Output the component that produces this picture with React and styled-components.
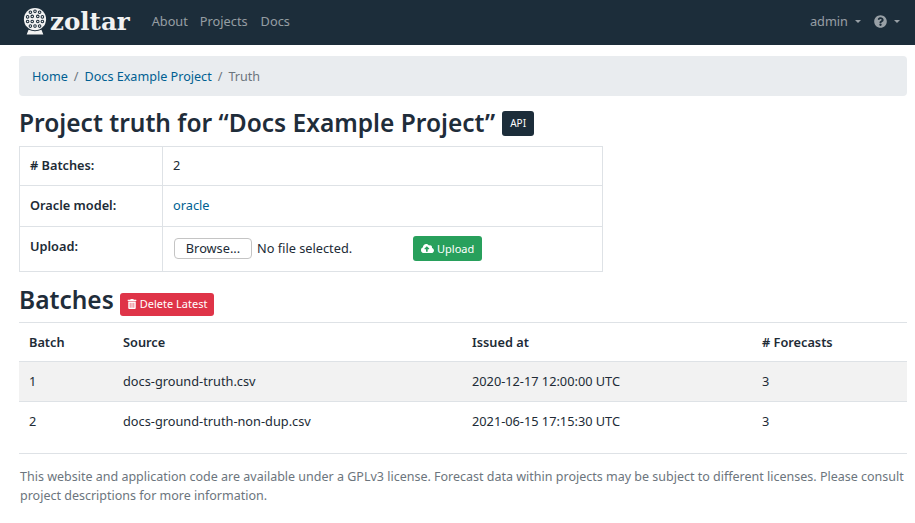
import React from "react";
import styled, { createGlobalStyle } from "styled-components";
import { FaQuestionCircle, FaCloudUploadAlt, FaTrashAlt } from "react-icons/fa";

const Global = createGlobalStyle`
  html, body { margin: 0; padding: 0; background: #fff; }
  body {
    font-family: "Noto Sans", "Open Sans", sans-serif;
    font-size: 12.75px;
    line-height: 19.5px;
    color: #212b36;
  }
  * { box-sizing: border-box; }
`;

const Nav = styled.nav`
  height: 45px;
  background: #1c2d3a;
  display: flex;
  align-items: center;
  padding: 0 15px 2px 23px;
`;
const Brand = styled.div`
  display: flex;
  align-items: center;
  gap: 3px;
  margin-right: 22px;
  color: #f2f2f2;
  font-family: "DejaVu Serif", serif;
  font-weight: 700;
  font-size: 24.5px;
  line-height: 30px;
`;
const NavLink = styled.a`
  color: rgba(255, 255, 255, 0.55);
  margin-left: ${(p) => p.$gap || 0}px;
`;
const Spacer = styled.div`
  flex: 1;
`;
const Caret = styled.span`
  display: inline-block;
  margin-left: 7px;
  border-top: 3px solid rgba(255, 255, 255, 0.55);
  border-left: 3px solid transparent;
  border-right: 3px solid transparent;
`;
const NavMenu = styled.div`
  color: rgba(255, 255, 255, 0.55);
  display: flex;
  align-items: center;
  margin-left: ${(p) => p.$gap || 0}px;
`;

const Page = styled.main`
  padding: 11px 8px 0 19px;
`;
const Crumbs = styled.div`
  height: 40px;
  background: #e9ecef;
  border-radius: 4px;
  display: flex;
  align-items: center;
  padding: 1px 13px 0;
  font-size: 12.6px;
  color: #6c757d;
`;
const Link = styled.a`
  color: #005f92;
`;
const Sep = styled.span`
  color: #6c757d;
  padding: 0 6px;
`;
const TitleRow = styled.div`
  display: flex;
  align-items: center;
  gap: ${(p) => p.$gap}px;
  margin-top: ${(p) => p.$top}px;
  height: 30px;
`;
const H1 = styled.h1`
  margin: 0;
  font-size: 24.5px;
  line-height: 30px;
  font-weight: 600;
  color: #1f2d3a;
`;
const ApiBadge = styled.span`
  background: #1c2d3a;
  color: #fff;
  font-size: 10px;
  line-height: 25px;
  height: 25px;
  width: 32px;
  text-align: center;
  border-radius: 3px;
`;
const Button = styled.span`
  display: inline-flex;
  align-items: center;
  gap: 3px;
  height: ${(p) => p.$h}px;
  padding: 0 ${(p) => p.$pad}px;
  margin-top: ${(p) => p.$top || 0}px;
  color: #fff;
  font-size: 11px;
  border-radius: 3px;
  background: ${(p) => p.$bg};
`;
const InfoTable = styled.table`
  border-collapse: collapse;
  width: 584px;
  margin-top: 8px;
  td {
    border: 1px solid #dee2e6;
    padding: 0 10px;
  }
  td:first-child {
    font-weight: 600;
    width: 143px;
  }
`;
const Row = styled.tr`
  height: ${(p) => p.$h}px;
`;
const UploadLabel = styled.td`
  && {
    padding-bottom: 4px;
  }
`;
const UploadCell = styled.div`
  display: flex;
  align-items: center;
  height: 44px;
  padding-bottom: 1px;
`;
const Browse = styled.span`
  width: 78px;
  height: 21px;
  border: 1px solid #c4c4c4;
  border-radius: 4px;
  background: #fff;
  display: flex;
  align-items: center;
  justify-content: center;
  margin: 0 5px 0 1px;
`;
const FileName = styled.span`
  width: 156px;
`;
const BatchTable = styled.table`
  border-collapse: collapse;
  width: 100%;
  table-layout: fixed;
  margin-top: 7px;
  th, td {
    border-top: 1px solid #dee2e6;
    padding: 0 10px;
    text-align: left;
    height: 40px;
  }
  th {
    font-weight: 600;
    height: 39px;
    padding-top: 2px;
    border-bottom: 1px solid #dee2e6;
  }
  tbody tr:nth-child(odd) {
    background: #f2f2f2;
  }
`;
const Col = styled.col`
  width: ${(p) => p.$w}px;
`;
const Footer = styled.footer`
  border-top: 1px solid #dee2e6;
  margin-top: 11px;
  padding: 13px 0 0 1px;
  font-size: 12.5px;
  line-height: 19px;
  color: #6c757d;
`;

const dots = [
  [8, 5], [13, 4], [18, 5], [5, 10], [10, 9.5], [16, 9.5], [21, 10],
  [5, 15], [10, 15], [16, 15], [21, 15], [8, 20], [13, 20], [18, 20],
];

function Ball() {
  return (
    <svg width="24" height="29" viewBox="0 0 26 30">
      <circle cx="13" cy="12.5" r="12" fill="#f2f2f2" />
      {dots.map(([x, y]) => (
        <circle key={x + "-" + y} cx={x} cy={y} r="1.4" fill="none" stroke="#1c2d3a" strokeWidth="1.1" />
      ))}
      <path d="M6 24 L4 29 H22 L20 24 Q13 27 6 24 Z" fill="#f2f2f2" />
    </svg>
  );
}

export default function App() {
  return (
    <>
      <Global />
      <Nav>
        <Brand>
          <Ball />
          zoltar
        </Brand>
        <NavLink>About</NavLink>
        <NavLink $gap={12}>Projects</NavLink>
        <NavLink $gap={13}>Docs</NavLink>
        <Spacer />
        <NavMenu>
          admin
          <Caret />
        </NavMenu>
        <NavMenu $gap={13}>
          <FaQuestionCircle size={13} />
          <Caret />
        </NavMenu>
      </Nav>
      <Page>
        <Crumbs>
          <Link>Home</Link>
          <Sep>/</Sep>
          <Link>Docs Example Project</Link>
          <Sep>/</Sep>
          Truth
        </Crumbs>
        <TitleRow $top={12} $gap={7}>
          <H1>Project truth for “Docs Example Project”</H1>
          <ApiBadge>API</ApiBadge>
        </TitleRow>
        <InfoTable>
          <tbody>
            <Row $h={39}>
              <td># Batches:</td>
              <td>2</td>
            </Row>
            <Row $h={41}>
              <td>Oracle model:</td>
              <td>
                <Link>oracle</Link>
              </td>
            </Row>
            <Row $h={45}>
              <UploadLabel>Upload:</UploadLabel>
              <td>
                <UploadCell>
                  <Browse>Browse...</Browse>
                  <FileName>No file selected.</FileName>
                  <Button $bg="#28a05c" $h={25} $pad={8}>
                    <FaCloudUploadAlt size={13} />
                    Upload
                  </Button>
                </UploadCell>
              </td>
            </Row>
          </tbody>
        </InfoTable>
        <TitleRow $top={13} $gap={6}>
          <H1>Batches</H1>
          <Button $bg="#df3448" $h={23} $pad={7} $top={8}>
            <FaTrashAlt size={10} />
            Delete Latest
          </Button>
        </TitleRow>
        <BatchTable>
          <colgroup>
            <Col $w={94} />
            <Col $w={349} />
            <Col $w={290} />
            <Col />
          </colgroup>
          <thead>
            <tr>
              <th>Batch</th>
              <th>Source</th>
              <th>Issued at</th>
              <th># Forecasts</th>
            </tr>
          </thead>
          <tbody>
            <tr>
              <td>1</td>
              <td>docs-ground-truth.csv</td>
              <td>2020-12-17 12:00:00 UTC</td>
              <td>3</td>
            </tr>
            <tr>
              <td>2</td>
              <td>docs-ground-truth-non-dup.csv</td>
              <td>2021-06-15 17:15:30 UTC</td>
              <td>3</td>
            </tr>
          </tbody>
        </BatchTable>
        <Footer>
          This website and application code are available under a GPLv3 license. Forecast data within projects may be subject to different licenses. Please consult project descriptions for more information.
        </Footer>
      </Page>
    </>
  );
}
